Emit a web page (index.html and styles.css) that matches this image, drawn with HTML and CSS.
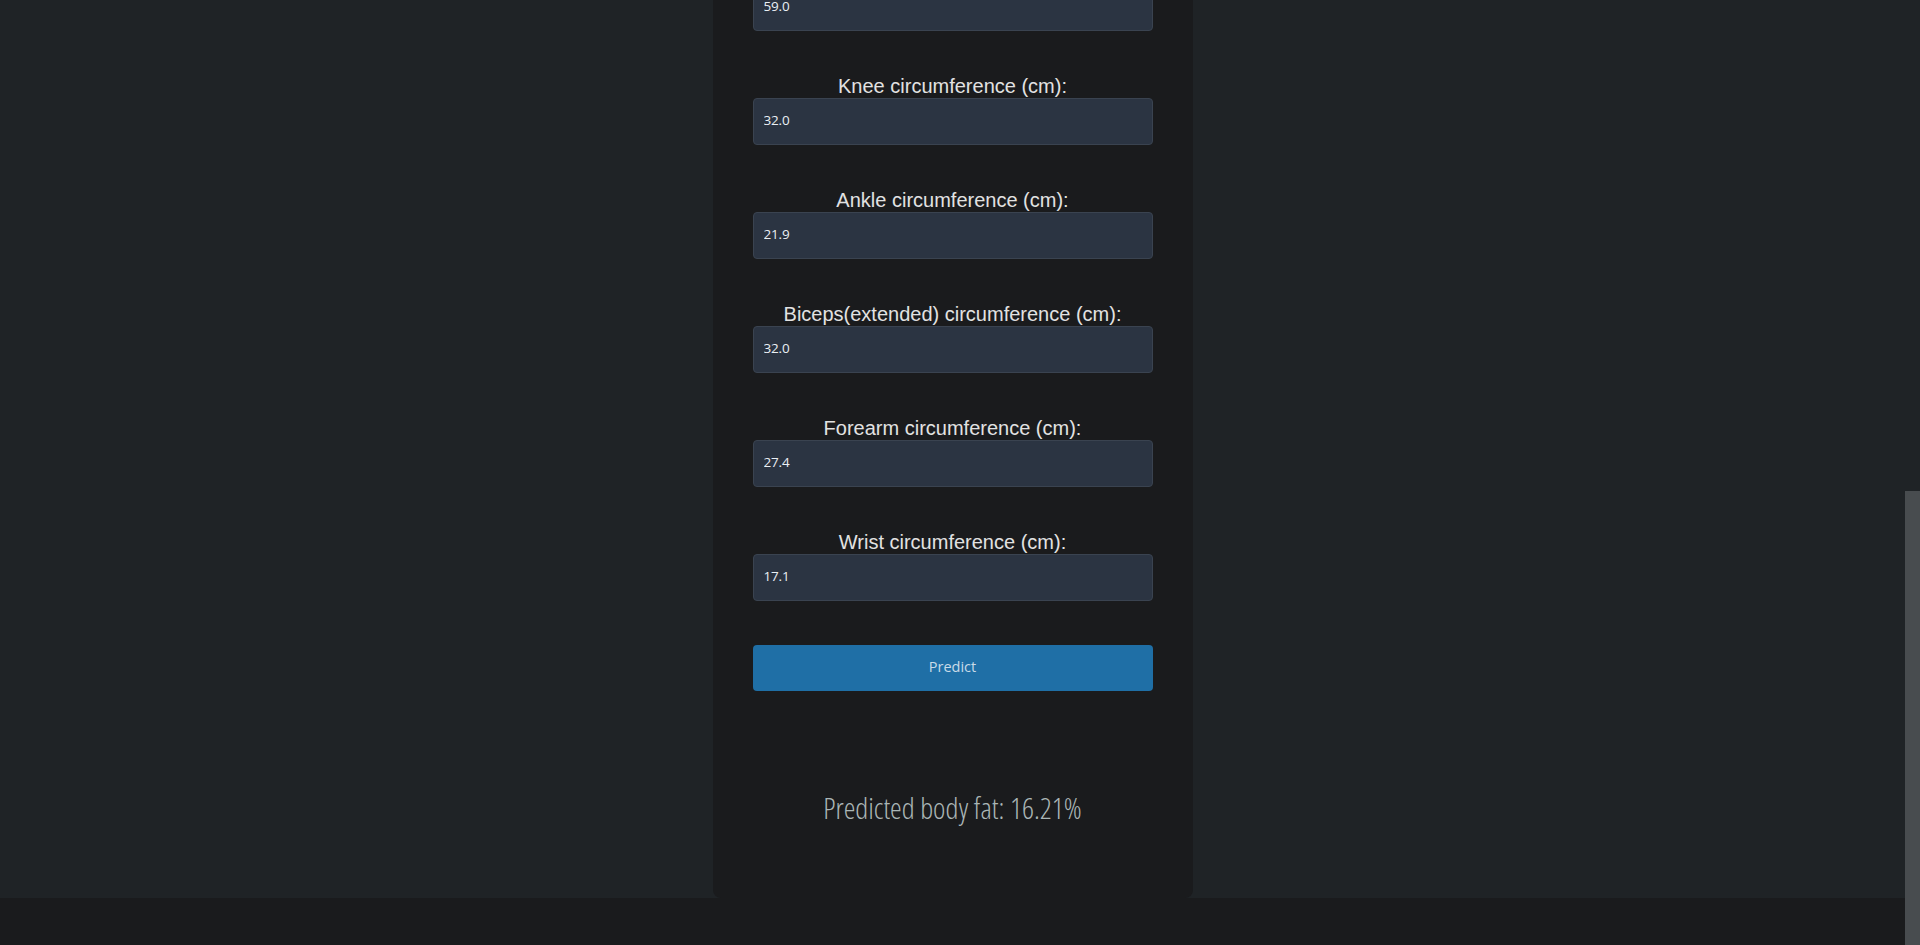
FILE: index.html
```html
<!DOCTYPE html>
<html lang="en">
<head>
<meta charset="utf-8">
<title>Body Fat Predictor</title>
<link rel="stylesheet" href="styles.css">
</head>
<body>
<div class="viewport">
  <div class="page">
    <main class="main">
      <form class="card">
        <div class="field field-clipped">
          <input class="input" type="text" value="59.0">
        </div>
        <div class="field">
          <label class="label">Knee circumference (cm):</label>
          <input class="input" type="text" value="32.0">
        </div>
        <div class="field">
          <label class="label">Ankle circumference (cm):</label>
          <input class="input" type="text" value="21.9">
        </div>
        <div class="field">
          <label class="label">Biceps(extended) circumference (cm):</label>
          <input class="input" type="text" value="32.0">
        </div>
        <div class="field">
          <label class="label">Forearm circumference (cm):</label>
          <input class="input" type="text" value="27.4">
        </div>
        <div class="field">
          <label class="label">Wrist circumference (cm):</label>
          <input class="input" type="text" value="17.1">
        </div>
        <button class="btn" type="button">Predict</button>
        <p class="result">Predicted body fat: 16.21%</p>
      </form>
    </main>
    <div class="footer-space"></div>
  </div>
  <div class="scrollbar"><div class="thumb"></div></div>
</div>
</body>
</html>
```
FILE: styles.css
```css
html, body {
  margin: 0;
  padding: 0;
  height: 945px;
  overflow: hidden;
  background: #1a1b1d;
}
.viewport {
  display: flex;
  height: 945px;
}
.page {
  flex: 1;
  display: flex;
  flex-direction: column;
}
.main {
  height: 898px;
  background: #1f2326;
  display: flex;
  justify-content: center;
}
.footer-space {
  flex: 1;
  background: #1a1b1d;
}
.card {
  width: 480px;
  box-sizing: border-box;
  background: #1a1b1d;
  border-radius: 0 0 8px 8px;
  padding: 0 40px;
  display: flex;
  flex-direction: column;
}
.field {
  display: flex;
  flex-direction: column;
  margin-top: 44px;
}
.field-clipped {
  margin-top: 0;
  height: 31px;
  overflow: hidden;
  justify-content: flex-end;
}
.field-clipped .input {
  flex-shrink: 0;
}
.label {
  font-family: "Liberation Sans", Arial, sans-serif;
  font-size: 20px;
  line-height: 23px;
  color: #e2e2e2;
  text-align: center;
}
.input {
  height: 47px;
  box-sizing: border-box;
  background: #2b3442;
  border: 1px solid #3a4350;
  border-radius: 4px;
  padding: 0 10px 3px;
  font-family: "Open Sans", sans-serif;
  font-size: 13.5px;
  letter-spacing: -0.2px;
  color: #eaeff4;
  outline: none;
}
.btn {
  margin-top: 44px;
  height: 46px;
  border: none;
  border-radius: 4px;
  background: #1f6fa6;
  color: #c9dbe8;
  font-family: "Open Sans", sans-serif;
  font-size: 14.5px;
  padding: 0 0 3px;
}
.result {
  margin: 96px 0 0;
  text-align: center;
  font-family: "Open Sans", sans-serif;
  font-weight: 300;
  font-stretch: 75%;
  font-size: 29.5px;
  color: #abb6b6;
}
.scrollbar {
  width: 15px;
  background: #1f2326;
  display: flex;
  flex-direction: column;
  justify-content: flex-end;
}
.thumb {
  height: 454px;
  background: #484c4f;
}
```
